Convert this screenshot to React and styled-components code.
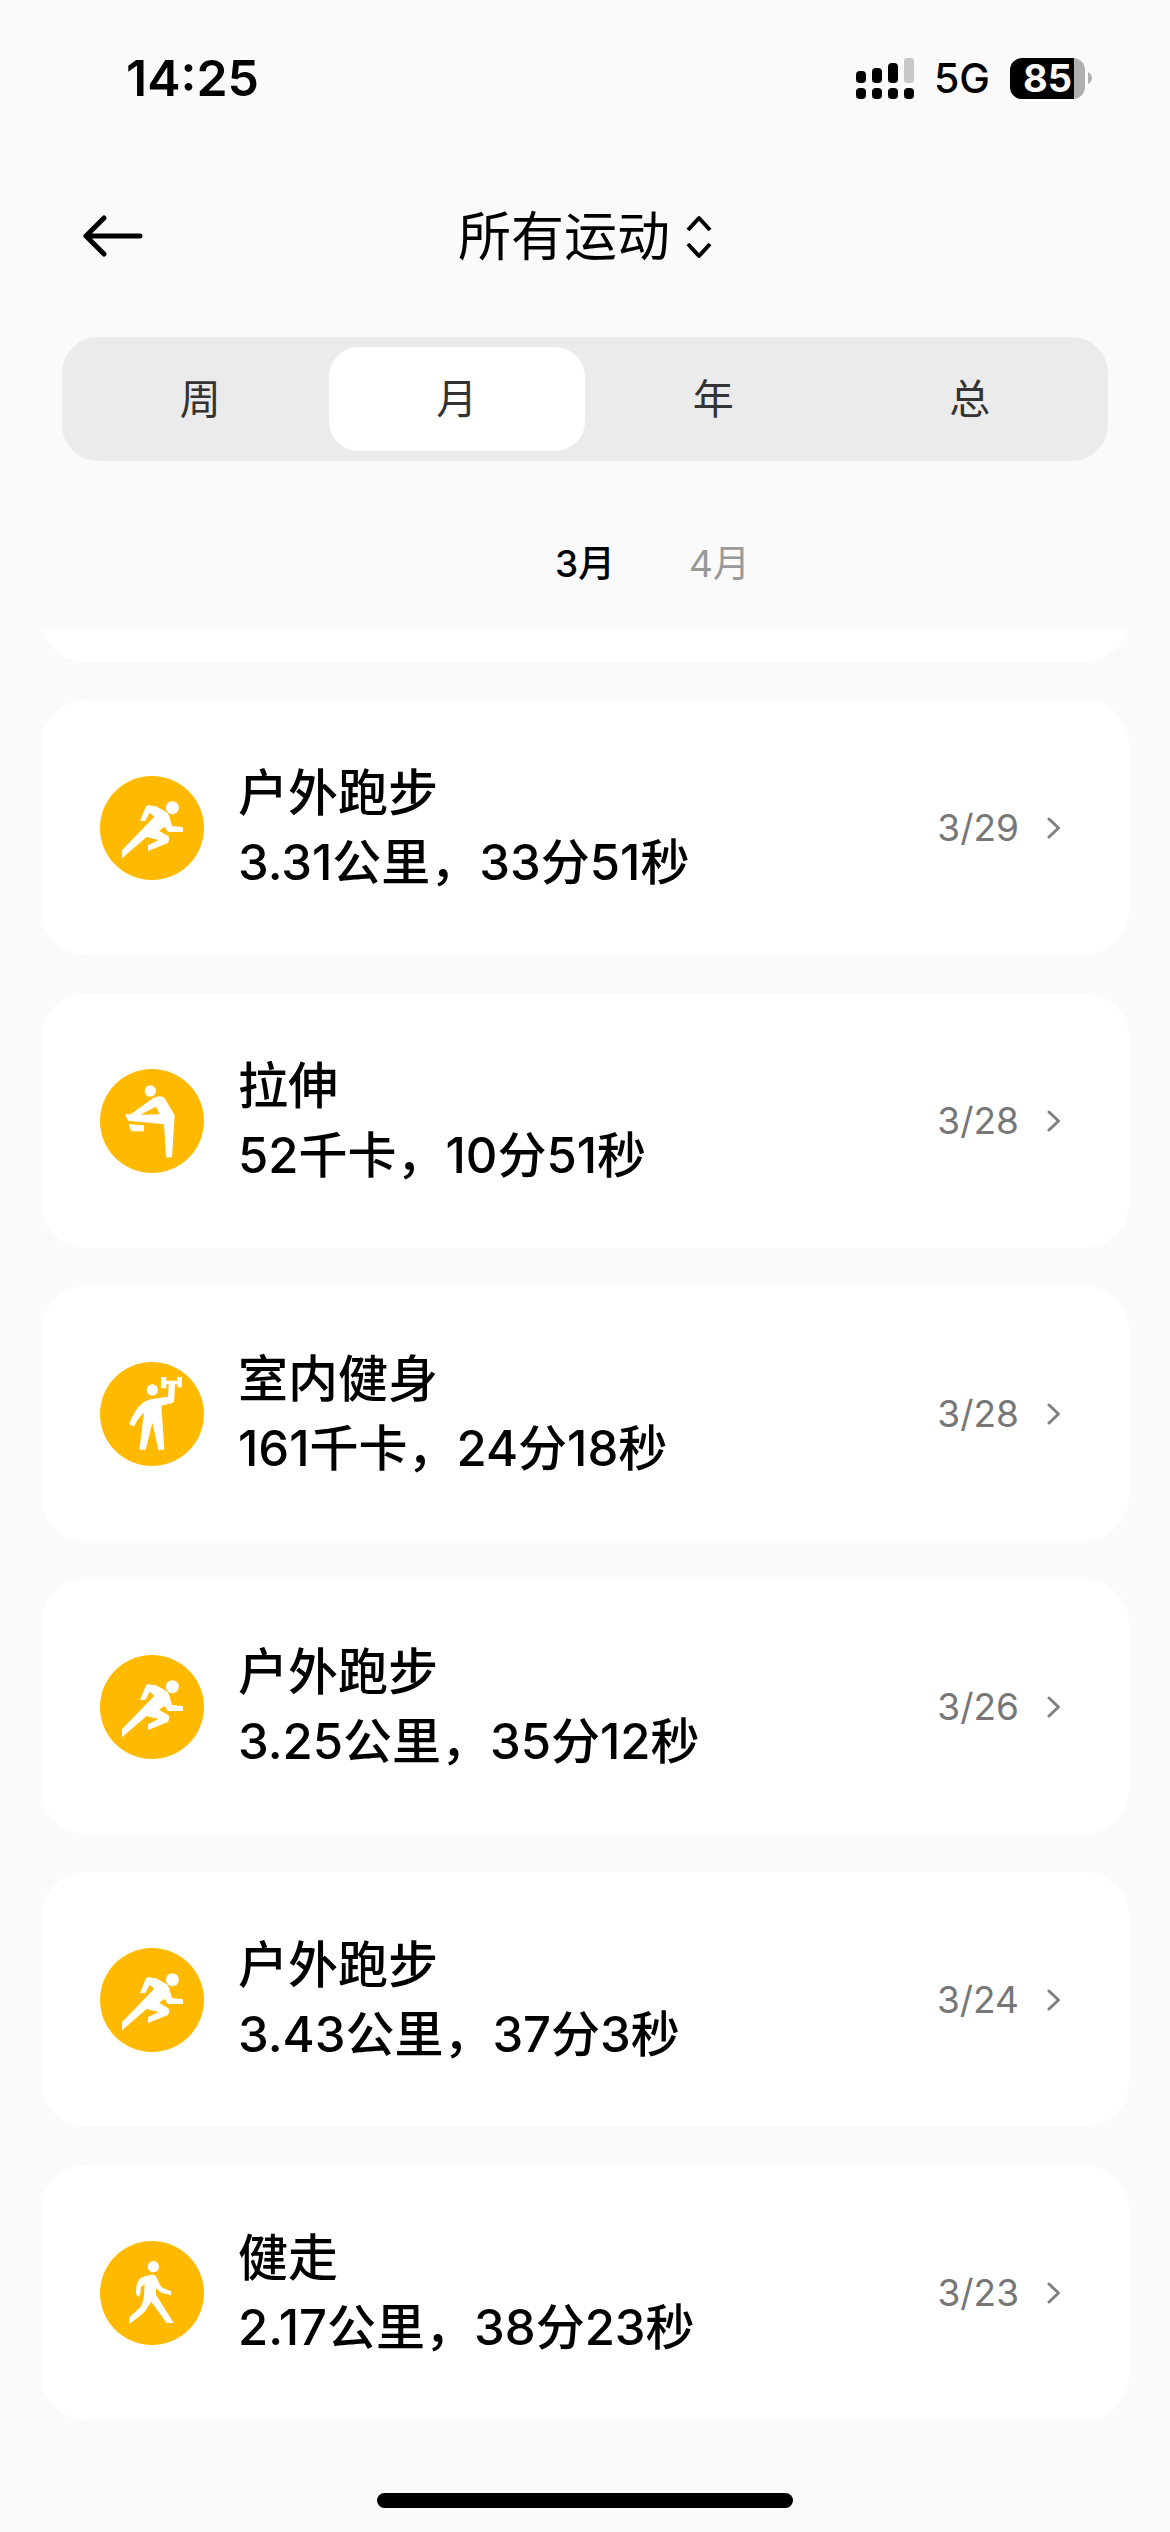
import { useState } from 'react';
import styled, { createGlobalStyle } from 'styled-components'

const GlobalStyle = createGlobalStyle`
* {
box-sizing: border-box;
}
body {
margin: 0;
background-color: #fafafa;
font-family: Inter, "Noto Sans CJK SC", sans-serif;
color: #000;
}
button {
border: none;
padding: 0;
background: none;
font-family: inherit;
color: inherit;
cursor: pointer;
}
`;
const Page = styled.div`
min-height: 100vh;
display: flex;
flex-direction: column;
`;
const StatusBar = styled.div`
display: flex;
align-items: center;
justify-content: space-between;
height: 156px;
padding: 0 78px 0 126px;
`;
const Time = styled.span`
font-size: 50px;
font-weight: 600;
`;
const StatusIcons = styled.div`
display: flex;
align-items: center;
gap: 20px;
`;
const Network = styled.span`
font-size: 41px;
font-weight: 500;
line-height: 48px;
`;
const Battery = styled.div`
display: flex;
align-items: center;
gap: 3px;
`;
const BatteryBody = styled.div`
width: 75px;
height: 41px;
border-radius: 12px;
background: linear-gradient(to right, #000 85%, #b0b0b0 85%);
color: #fafafa;
font-size: 38px;
font-weight: 700;
line-height: 41px;
text-align: center;
`;
const Header = styled.header`
display: grid;
grid-template-columns: 1fr auto 1fr;
align-items: center;
height: 160px;
padding: 0 80px;
`;
const BackButton = styled.button`
display: flex;
justify-self: start;
`;
const SportPicker = styled.button`
display: flex;
align-items: center;
gap: 16px;
padding-top: 2px;
font-size: 53px;
font-weight: 400;
line-height: 64px;
`;
const Tabs = styled.nav`
display: flex;
margin: 21px 62px 0;
padding: 10px;
border-radius: 36px;
background-color: #ebebeb;
`;
const Tab = styled.button`
flex: 1;
height: 104px;
padding-bottom: 6px;
border-radius: 30px;
background-color: ${(props) => (props.$active ? "#fff" : "transparent")};
color: #333;
font-size: 41px;
`;
const Months = styled.div`
display: grid;
grid-template-columns: 1fr auto 1fr;
gap: 74px;
height: 169px;
padding-top: 30px;
`;
const Month = styled.button`
grid-column: ${(props) => props.$column};
justify-self: start;
font-size: 37px;
font-weight: ${(props) => (props.$active ? 500 : 400)};
color: ${(props) => (props.$active ? "#000" : "#999")};
`;
const List = styled.main`
display: flex;
flex-direction: column;
gap: 38px;
padding: 0 41px;
`;
const Peek = styled.div`
display: flex;
align-items: flex-end;
height: 32px;
overflow: hidden;
`;
const Card = styled.a`
flex: none;
display: flex;
align-items: center;
width: 100%;
height: 255px;
padding: 0 68px 0 59px;
border-radius: 45px;
background-color: #fff;
color: inherit;
text-decoration: none;
`;
const SportIcon = styled.svg`
flex: none;
width: 104px;
height: 104px;
margin-right: 34px;
`;
const Info = styled.div`
flex: 1;
font-weight: 500;
line-height: 70px;
`;
const Title = styled.div`
font-size: 50px;
`;
const Summary = styled.div`
font-size: 49px;
`;
const DateText = styled.span`
margin-right: 28px;
color: #777;
font-size: 37px;
font-weight: 400;
`;
const HomeBar = styled.div`
width: 416px;
height: 15px;
margin: auto auto 24px;
border-radius: 8px;
background-color: #000;
`;

const shapes = {
    run: (
        <>
            <circle cx="217" cy="95" r="19.5" />
            <path d="M145 88 L168 91 L199 108 Q207 113 210 130 L216 150 L249 154 V168 H204 L194 153 L177 164 L204 180 Q210 184 207 192 L204 201 L144 225 V208 L176 192 L140 183 L66 247 V223 L163 122 L149 110 L136 135 H120 L137 93 Q140 88 145 88Z" />
        </>
    ),
    stretch: (
        <>
            <circle cx="151" cy="66" r="17" />
            <path fillRule="evenodd" d="M75 136 H92 L160 87 Q172 80 188 83 L194 88 L224 139 L216 265 H198 L192 166 L84 155Z M121 137 L179 136 L168 113Z" />
            <path d="M86 166 L132 169 V187 H94Z" />
        </>
    ),
    gym: (
        <>
            <circle cx="157" cy="84" r="17" />
            <path d="M87 186 L102 194 Q114 166 132 152 L118 263 H137 L157 182 L175 263 H193 L184 131 L215 124 Q222 121 223 113 L225 66 H206 L204 104 L152 112 Q125 118 107 146 Q95 165 87 186Z" />
            <path d="M183 45 H199 V56 H232 V45 H246 V76 H232 V67 H199 V79 H183Z" />
        </>
    ),
    walk: (
        <>
            <circle cx="160" cy="77" r="17" />
            <path d="M152 101 Q162 100 168 106 L179 129 Q182 138 190 141 L213 151 V163 L184 155 L168 142 V161 L221 246 H200 L154 182 L136 209 Q132 216 88 249 V229 L121 199 Q130 185 132 162 L134 130 L123 137 L121 159 L115 167 L108 160 L109 137 Q112 120 121 112 Q134 104 152 101Z" />
        </>
    ),
};

const records = [
    { id: 1, sport: "run", title: "户外跑步", summary: "3.31公里，33分51秒", date: "3/29" },
    { id: 2, sport: "stretch", title: "拉伸", summary: "52千卡，10分51秒", date: "3/28" },
    { id: 3, sport: "gym", title: "室内健身", summary: "161千卡，24分18秒", date: "3/28" },
    { id: 4, sport: "run", title: "户外跑步", summary: "3.25公里，35分12秒", date: "3/26" },
    { id: 5, sport: "run", title: "户外跑步", summary: "3.43公里，37分3秒", date: "3/24" },
    { id: 6, sport: "walk", title: "健走", summary: "2.17公里，38分23秒", date: "3/23" },
];

const Signal = () => (
    <svg width="58" height="41" viewBox="0 0 58 41">
        <rect x="0" y="13" width="10" height="12" rx="4" />
        <rect x="16" y="10" width="10" height="15" rx="4" />
        <rect x="32" y="5" width="10" height="20" rx="4" />
        <rect x="48" y="0" width="10" height="25" rx="3" fill="#c8c8c8" />
        {[0, 16, 32, 48].map((x) => (
            <rect key={x} x={x} y="30" width="10" height="11" rx="4" />
        ))}
    </svg>
)

const Record = ({ record }) => (
    <Card href="#">
        <SportIcon viewBox="0 0 312 312" fill="#fff">
            <circle cx="156" cy="156" r="156" fill="#ffba00" />
            {shapes[record.sport]}
        </SportIcon>
        <Info>
            <Title>{record.title}</Title>
            <Summary>{record.summary}</Summary>
        </Info>
        <DateText>{record.date}</DateText>
        <svg width="14" height="22" viewBox="0 0 14 22" fill="none" stroke="#808080" strokeWidth="3" strokeLinecap="round" strokeLinejoin="round">
            <path d="M2 2 L11.5 11 L2 20" />
        </svg>
    </Card>
)

const App = () => {
    const [tab, setTab] = useState("月");
    const [month, setMonth] = useState("3月");

    return (
        <Page>
            <GlobalStyle />
            <StatusBar>
                <Time>14:25</Time>
                <StatusIcons>
                    <Signal />
                    <Network>5G</Network>
                    <Battery>
                        <BatteryBody>85</BatteryBody>
                        <svg width="4" height="12" viewBox="0 0 4 12">
                            <path d="M0 0 Q4 2 4 6 Q4 10 0 12Z" fill="#b0b0b0" />
                        </svg>
                    </Battery>
                </StatusIcons>
            </StatusBar>
            <Header>
                <BackButton aria-label="返回">
                    <svg width="64" height="44" viewBox="0 0 64 44" fill="none" stroke="#000" strokeWidth="5" strokeLinecap="round" strokeLinejoin="round">
                        <path d="M60 22 H6 M24 4 L6 22 L24 40" />
                    </svg>
                </BackButton>
                <SportPicker>
                    所有运动
                    <svg width="26" height="44" viewBox="0 0 26 44" fill="none" stroke="#000" strokeWidth="4" strokeLinejoin="round">
                        <path d="M2 15 L13 3 L24 15 M2 29 L13 41 L24 29" />
                    </svg>
                </SportPicker>
            </Header>
            <Tabs>
                {["周", "月", "年", "总"].map((name) => (
                    <Tab key={name} $active={name === tab} onClick={() => setTab(name)}>{name}</Tab>
                ))}
            </Tabs>
            <Months>
                {["3月", "4月"].map((name, i) => (
                    <Month key={name} $column={i + 2} $active={name === month} onClick={() => setMonth(name)}>{name}</Month>
                ))}
            </Months>
            <List>
                <Peek>
                    <Card as="div" />
                </Peek>
                {records.map((record) => (
                    <Record key={record.id} record={record} />
                ))}
            </List>
            <HomeBar />
        </Page>
    )
}

export default App
